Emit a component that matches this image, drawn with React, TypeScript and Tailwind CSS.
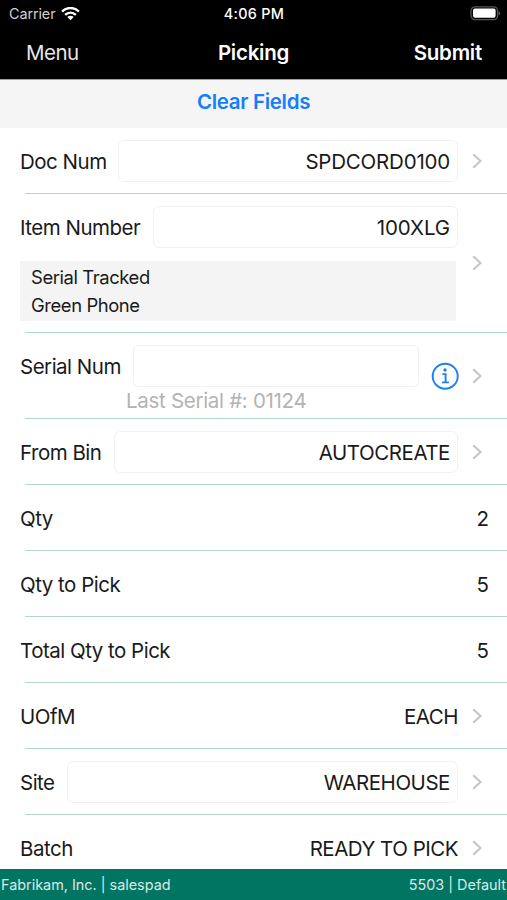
import React from 'react';
import { clsx } from 'clsx';

interface RowProps {
  label: string;
  value?: string;
  valueClass?: string;
  fieldClass?: string;
  chevron?: boolean;
}

const Chevron: React.FC = () => (
  <svg className="h-[16px] w-[10px] shrink-0" viewBox="0 0 10 16" fill="none" stroke="#c4c4c6" strokeWidth="2">
    <path d="M1.2 1.3 8.6 8 1.2 14.7" />
  </svg>
);

const Divider: React.FC = () => <div className="ml-[25px] h-px shrink-0 bg-[#b2d6ce]" />;

const WifiIcon: React.FC = () => (
  <svg className="h-[14px] w-[19px]" viewBox="0 0 19 14" fill="none" stroke="#fff" strokeWidth="2.4">
    <path d="M1.1 4.6C5.9-.2 13.1-.2 17.9 4.6" />
    <path d="M4.1 7.9c3.2-3 7.6-3 10.8 0" />
    <path d="M9.5 13.3 6.3 10.1c1.9-1.7 4.5-1.7 6.4 0Z" fill="#fff" stroke="none" />
  </svg>
);

const BatteryIcon: React.FC = () => (
  <svg className="h-[15px] w-[31px]" viewBox="0 0 31 15" fill="none">
    <rect x="1" y=".8" width="26.6" height="12.8" rx="4" stroke="#555" strokeWidth="1.3" />
    <rect x="3" y="2.6" width="22.6" height="9.2" rx="2" fill="#fff" />
    <path d="M28.7 4.9c2 .9 2 3.7 0 4.6Z" fill="#555" />
  </svg>
);

const InfoIcon: React.FC = () => (
  <svg className="h-[28px] w-[28px]" viewBox="0 0 28 28" fill="none" stroke="#1a7ff0" strokeWidth="1.9">
    <circle cx="14.2" cy="14.2" r="12.5" />
    <circle cx="14" cy="8" r="1.7" fill="#1a7ff0" stroke="none" />
    <path d="M11.5 12.1h3.1v8.2M11 20.4h6.9" />
  </svg>
);

const Label: React.FC<{ children: React.ReactNode }> = ({ children }) => (
  <span className="pt-[2px] whitespace-nowrap tracking-[-0.5px]">{children}</span>
);

const Field: React.FC<{ className?: string; children?: React.ReactNode }> = ({ className, children }) => (
  <div
    className={clsx(
      'flex h-[42px] items-center justify-end rounded-[6px] border border-[#f1f1f1] bg-white pt-[2px] pr-[7px] whitespace-nowrap',
      className
    )}
  >
    {children}
  </div>
);

const Row: React.FC<RowProps> = ({ label, value, valueClass, fieldClass, chevron = true }) => (
  <>
    <div className="flex h-[65px] shrink-0 items-center pl-[20px]">
      <Label>{label}</Label>
      {fieldClass ? (
        <Field className={clsx('ml-auto', fieldClass)}>
          <span className={valueClass}>{value}</span>
        </Field>
      ) : (
        <span className={clsx('ml-auto pt-[2px]', valueClass)}>{value}</span>
      )}
      {chevron ? (
        <div className="ml-[14px] w-[35px]">
          <Chevron />
        </div>
      ) : (
        <div className="w-[18px]" />
      )}
    </div>
    <Divider />
  </>
);

const App: React.FC = () => {
  return (
    <div className="flex h-[900px] w-[507px] flex-col overflow-hidden bg-white font-['Inter',sans-serif] text-[20.5px] leading-[24px] text-[#1a1a1a]">
      {/* Status bar */}
      <div className="grid h-[28px] shrink-0 grid-cols-3 items-center bg-black pr-[6px] pb-px pl-[9px] text-[14.4px] text-white">
        <div className="flex items-center gap-[6px] text-[#cfcfcf]">
          <span className="tracking-[-0.1px]">Carrier</span>
          <WifiIcon />
        </div>
        <span className="-ml-[2px] text-center font-medium tracking-[0.3px]">4:06 PM</span>
        <div className="flex justify-end">
          <BatteryIcon />
        </div>
      </div>

      {/* Navigation */}
      <div className="grid h-[51px] shrink-0 grid-cols-3 items-center bg-black px-[25px] pb-[2px] text-white">
        <span className="pl-px tracking-[-0.5px] text-[#e6e6e6]">Menu</span>
        <span className="text-center font-semibold tracking-[-0.25px]">Picking</span>
        <span className="text-right font-semibold tracking-[-0.25px]">Submit</span>
      </div>

      <div className="flex h-[49px] shrink-0 items-center justify-center border-t border-[#a0a0a0] bg-[#f5f5f5] pb-[4px] font-semibold tracking-[-0.3px] text-[#147efb]">
        Clear Fields
      </div>

      {/* Form */}
      <div className="flex min-h-0 flex-1 flex-col overflow-hidden">
        <Row label="Doc Num" value="SPDCORD0100" valueClass="tracking-[-0.2px]" fieldClass="w-[340px]" />

        <div className="flex h-[138px] shrink-0 items-center pl-[20px]">
          <div className="flex flex-1 flex-col">
            <div className="flex items-center justify-between">
              <Label>Item Number</Label>
              <Field className="w-[305px] tracking-[-0.1px]">100XLG</Field>
            </div>
            <div className="mt-[13px] mr-[2px] h-[60px] bg-[#f4f4f4] pt-[2px] pl-[11px] text-[18.4px] leading-[28px] tracking-[-0.4px]">
              <p>Serial Tracked</p>
              <p>Green Phone</p>
            </div>
          </div>
          <div className="ml-[14px] w-[35px]">
            <Chevron />
          </div>
        </div>
        <Divider />

        <div className="flex h-[85px] shrink-0 items-center pl-[20px]">
          <div className="flex w-[399px] flex-col pt-[7px]">
            <div className="flex items-center justify-between">
              <Label>Serial Num</Label>
              <Field className="w-[286px]" />
            </div>
            <span className="pt-[2px] pl-[106px] tracking-[-0.3px] text-[#b3b3b3]">Last Serial #: 01124</span>
          </div>
          <div className="ml-[12px] flex items-center gap-[13px]">
            <InfoIcon />
            <Chevron />
          </div>
        </div>
        <Divider />

        <Row label="From Bin" value="AUTOCREATE" valueClass="tracking-[-0.45px]" fieldClass="w-[344px]" />
        <Row label="Qty" value="2" chevron={false} />
        <Row label="Qty to Pick" value="5" chevron={false} />
        <Row label="Total Qty to Pick" value="5" chevron={false} />
        <Row label="UOfM" value="EACH" valueClass="tracking-[-0.5px]" />
        <Row label="Site" value="WAREHOUSE" valueClass="tracking-[-0.45px]" fieldClass="w-[391px]" />
        <Row label="Batch" value="READY TO PICK" valueClass="tracking-[-0.5px]" />
      </div>

      {/* Footer */}
      <div className="flex h-[31px] shrink-0 items-center justify-between bg-[#027562] pr-px pl-px text-[14.4px] text-[#d5eae6]">
        <span>Fabrikam, Inc. | salespad</span>
        <span>5503 | Default</span>
      </div>
    </div>
  );
};

export default App;
